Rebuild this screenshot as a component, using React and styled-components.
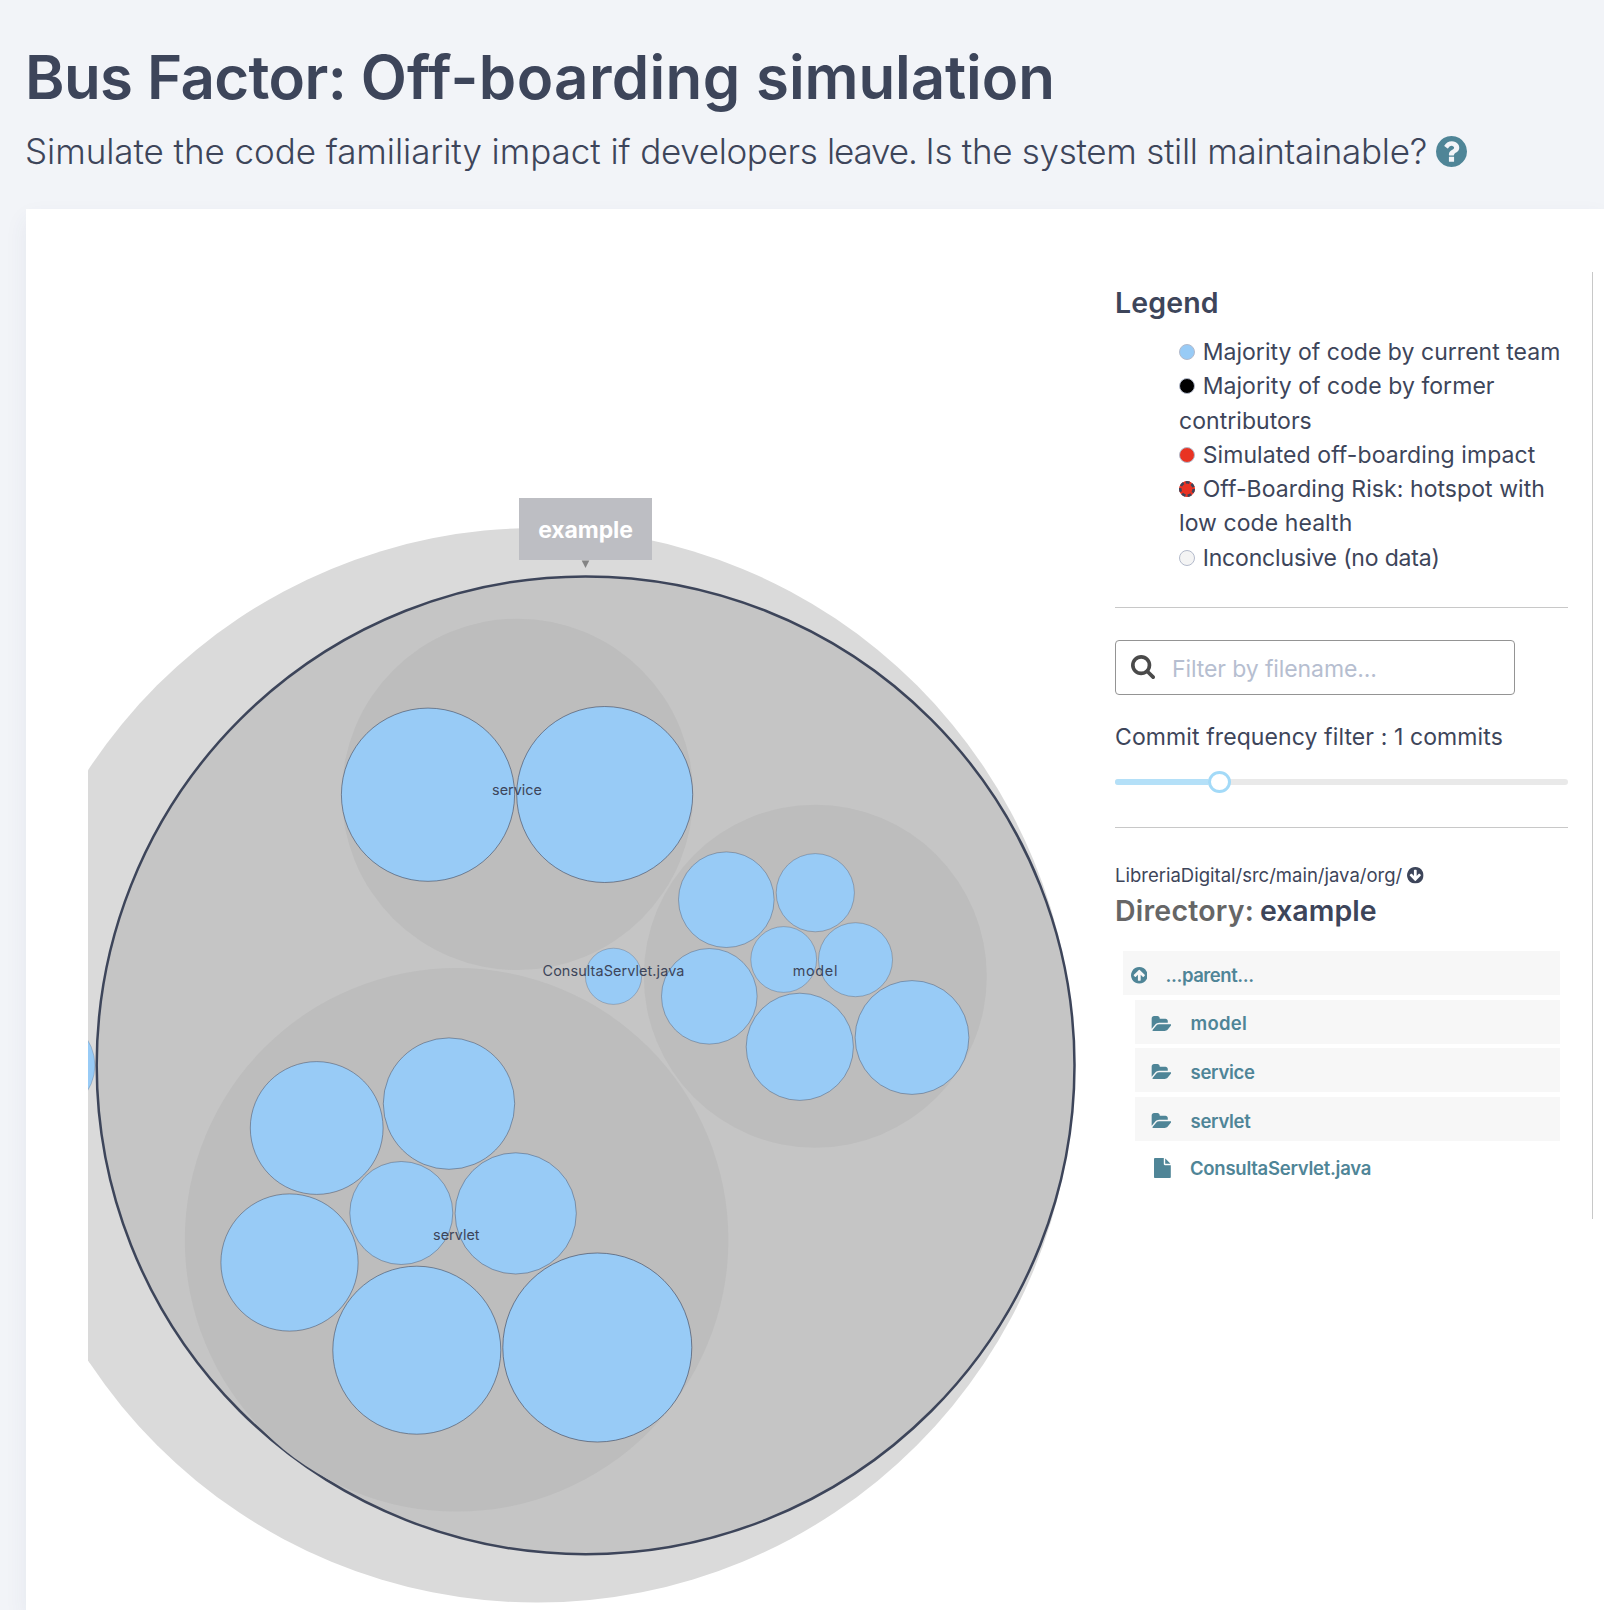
import React from 'react';
import styled, { createGlobalStyle } from 'styled-components';

const ink = '#3d455a';
const teal = '#4f8597';

const GlobalStyle = createGlobalStyle`
  * { box-sizing: border-box; }
  html, body { margin: 0; padding: 0; }
  body {
    background: #f2f4f8;
    color: ${ink};
    font-family: Inter, "Liberation Sans", sans-serif;
    overflow: hidden;
  }
`;

const Page = styled.div`
  display: flex;
  flex-direction: column;
  height: 1610px;
  padding: 41px 0 0 26px;
  overflow: hidden;
`;

const Header = styled.header`
  display: flex;
  flex-direction: column;
  gap: 16px;
  margin-bottom: 36px;
`;

const Title = styled.h1`
  margin: 0 0 0 -1px;
  font-size: 60px;
  line-height: 72px;
  font-weight: 600;
  letter-spacing: -0.1px;
  white-space: nowrap;
`;

const Subtitle = styled.p`
  display: flex;
  align-items: center;
  gap: 9px;
  margin: 0 0 0 -1px;
  font-size: 35px;
  line-height: 44px;
  font-weight: 300;
  letter-spacing: -0.263px;
  white-space: nowrap;
`;

const Tracked = styled.span`
  letter-spacing: ${(p) => p.$by}px;
`;

const Panel = styled.main`
  flex: 1;
  display: flex;
  align-items: flex-start;
  padding: 63px 0 0 62px;
  background: #fff;
  box-shadow: 0 10px 22px rgba(60, 70, 110, 0.07);
`;

const Chart = styled.svg`
  flex: none;
  display: block;
  width: 1027px;
  height: 1338px;
`;

const ChartLabel = styled.text`
  font-size: ${(p) => (p.$tip ? 23 : 14.4)}px;
  font-weight: ${(p) => (p.$tip ? 700 : 400)};
  letter-spacing: ${(p) => p.$tracking || 0}px;
  fill: ${(p) => (p.$tip ? '#fff' : ink)};
  text-anchor: middle;
`;

const Sidebar = styled.aside`
  flex: none;
  display: flex;
  flex-direction: column;
  width: 478px;
  height: 947px;
  padding: 13px 24px 0 0;
  border-right: 1px solid #c8c8c8;
`;

const Heading = styled.h2`
  display: flex;
  gap: 6px;
  margin: 0;
  font-size: 28.5px;
  line-height: 36px;
  font-weight: 600;
  letter-spacing: ${(p) => p.$tracking || 0}px;
`;

const Kind = styled.span`
  color: #666;
  letter-spacing: 0.2px;
`;

const LegendList = styled.ul`
  list-style: none;
  margin: 14px 0 32px;
  padding: 0 0 0 64px;
`;

const LegendItem = styled.li`
  font-size: 23px;
  line-height: 34.28px;
  letter-spacing: ${(p) => p.$tracking || 0}px;
`;

const Dot = styled.svg`
  width: 16px;
  height: 16px;
  margin-right: 7.7px;
`;

const Divider = styled.hr`
  flex: none;
  width: 100%;
  height: 1px;
  margin: 0;
  border: 0;
  background: #c8c8c8;
`;

const SearchBox = styled.label`
  display: flex;
  align-items: center;
  width: 400px;
  height: 55px;
  margin: 32px 0 25px;
  padding: 0 15px;
  gap: 17px;
  border: 1px solid #949494;
  border-radius: 4px;
`;

const SearchInput = styled.input`
  flex: 1;
  min-width: 0;
  padding: 4px 0 0;
  border: 0;
  outline: 0;
  background: none;
  color: ${ink};
  font: 400 23px/34px Inter, "Liberation Sans", sans-serif;
  letter-spacing: -0.1px;
  &::placeholder { color: #b6bed0; opacity: 1; }
`;

const SliderLabel = styled.div`
  font-size: 23px;
  line-height: 34px;
  letter-spacing: 0.1px;
`;

const SliderRail = styled.div`
  display: flex;
  align-items: center;
  height: 6px;
  margin: 25px 0 42px;
  border-radius: 6px;
  background: #e9e9e9;
`;

const SliderTrack = styled.div`
  width: 93px;
  height: 6px;
  border-radius: 6px 0 0 6px;
  background: #b4e0f8;
`;

const SliderHandle = styled.div`
  width: 23px;
  height: 22px;
  border: 3px solid #a3daf8;
  border-radius: 50%;
  background: #fff;
`;

const PathLine = styled.div`
  display: flex;
  align-items: center;
  gap: 5px;
  margin: 33px 0 4px;
  font-size: 18.5px;
  line-height: 28px;
`;

const FileTree = styled.nav`
  display: flex;
  flex-direction: column;
  gap: 4.667px;
  margin: 22px 8px 0 8px;
`;

const TreeRow = styled.a`
  display: flex;
  align-items: center;
  height: 44px;
  margin-left: ${(p) => (p.$kind === 'parent' ? 0 : 12)}px;
  padding: ${(p) => ({ parent: '5px 0 0 7.6px', folder: '3.4px 0 0 16px', file: '1px 0 0 19.4px' })[p.$kind]};
  gap: ${(p) => ({ parent: 18.4, folder: 19.2, file: 18.8 })[p.$kind]}px;
  background: ${(p) => (p.$kind === 'file' ? 'transparent' : '#f7f7f7')};
  color: ${teal};
  font-size: 18.5px;
  line-height: 28px;
  font-weight: 600;
  letter-spacing: ${(p) => p.$tracking}px;
`;

const Glyph = styled.svg`
  flex: none;
  display: block;
  fill: ${(p) => p.$color || 'currentColor'};
  transform: ${(p) => (p.$flip ? 'rotate(180deg)' : 'none')};
`;

const glyphs = {
  question: {
    box: '128 128 1536 1536',
    d: 'M1024 1376v-192q0-14-9-23t-23-9h-192q-14 0-23 9t-9 23v192q0 14 9 23t23 9h192q14 0 23-9t9-23zm256-672q0-88-55.5-163t-138.5-116-170-41q-243 0-371 213-15 24 8 42l132 100q7 6 19 6 16 0 25-12 53-68 86-92 34-24 86-24 48 0 85.5 26t37.5 59q0 38-20 61t-68 45q-63 28-115.5 86.5t-52.5 125.5v36q0 14 9 23t23 9h192q14 0 23-9t9-23q0-19 21.5-49.5t54.5-49.5q32-18 49-28.5t46-35 44.5-48 28-60.5 12.5-81zm384 192q0 209-103 385.5t-279.5 279.5-385.5 103-385.5-103-279.5-279.5-103-385.5 103-385.5 279.5-279.5 385.5-103 385.5 103 279.5 279.5 103 385.5z',
  },
  arrow: {
    box: '128 128 1536 1536',
    d: 'M1412 895q0-27-18-45l-362-362-91-91q-18-18-45-18t-45 18l-91 91-362 362q-18 18-18 45t18 45l91 91q18 18 45 18t45-18l189-189v502q0 26 19 45t45 19h128q26 0 45-19t19-45v-502l189 189q19 19 45 19t45-19l91-91q18-18 18-45zm252 1q0 209-103 385.5t-279.5 279.5-385.5 103-385.5-103-279.5-279.5-103-385.5 103-385.5 279.5-279.5 385.5-103 385.5 103 279.5 279.5 103 385.5z',
  },
  search: {
    box: '64 128 1664 1664',
    d: 'M1216 832q0-185-131.5-316.5t-316.5-131.5-316.5 131.5-131.5 316.5 131.5 316.5 316.5 131.5 316.5-131.5 131.5-316.5zm512 832q0 52-38 90t-90 38q-54 0-90-38l-343-342q-179 124-399 124-143 0-273.5-55.5t-225-150-150-225-55.5-273.5 55.5-273.5 150-225 225-150 273.5-55.5 273.5 55.5 225 150 150 225 55.5 273.5q0 220-124 399l343 343q37 37 37 90z',
  },
  folder: {
    box: '0 128 1943 1408',
    d: 'M1943 952q0 31-31 66l-336 396q-43 51-120.5 86.5t-143.5 35.5h-1088q-34 0-60.5-13t-26.5-43q0-31 31-66l336-396q43-51 120.5-86.5t143.5-35.5h1088q34 0 60.5 13t26.5 43zm-343-344v160h-832q-94 0-197 47.5t-164 119.5l-337 396-5 6q0-4-.5-12.5t-.5-12.5v-960q0-92 66-158t158-66h320q92 0 158 66t66 158v32h544q92 0 158 66t66 158z',
  },
  file: {
    box: '128 0 1536 1792',
    d: 'M1152 512v-472q22 14 36 28l408 408q14 14 28 36h-472zm-128 32q0 40 28 68t68 28h544v1056q0 40-28 68t-68 28h-1344q-40 0-68-28t-28-68v-1600q0-40 28-68t68-28h800v544z',
  },
};

function Icon({ name, w, h = w, color, flip }) {
  const g = glyphs[name];
  return (
    <Glyph viewBox={g.box} width={w} height={h} preserveAspectRatio="none" $color={color} $flip={flip}>
      <path d={g.d} />
    </Glyph>
  );
}

const directories = [
  [517.5, 794.4, 175.7],
  [815.3, 976.2, 171.5],
  [456.6, 1239.8, 271.8],
];

const files = [
  [428, 794.7, 86.6], [604.7, 794.5, 88],
  [726.3, 899.7, 47.8], [815.3, 892.7, 39.1], [783.7, 959.5, 32.9], [855.5, 959.7, 37],
  [709.3, 996.3, 47.8], [799.8, 1046.8, 53.6], [912, 1037.5, 56.9],
  [613.5, 976.3, 28.1],
  [316.7, 1128, 66.4], [449, 1103.6, 65.7], [401.3, 1213, 51.5], [515.7, 1213.4, 60.6],
  [289.5, 1262.5, 68.6], [416.8, 1350.2, 84], [597.3, 1347.5, 94.5],
];

const labels = [
  ['service', 517, 795, 0],
  ['ConsultaServlet.java', 613.5, 976, 0.1],
  ['model', 815.4, 976, 0.7],
  ['servlet', 456.3, 1240, 0],
];

function PackChart() {
  return (
    <Chart viewBox="88 272 1027 1338">
      <circle cx="537" cy="1065.3" r="537.3" fill="#dadada" />
      <circle cx="46.9" cy="1065.3" r="48" fill="#98cbf6" stroke={ink} strokeOpacity="0.3" strokeWidth="0.8" />
      <circle cx="585.6" cy="1065.3" r="488.9" fill="#c5c5c5" stroke={ink} strokeWidth="2.5" />
      {directories.map(([x, y, r]) => (
        <circle key={x} cx={x} cy={y} r={r} fill="#bdbdbd" />
      ))}
      {files.map(([x, y, r]) => (
        <circle key={x} cx={x} cy={y} r={r} fill="#98cbf6" stroke={ink} strokeOpacity={0.12 + r / 190} strokeWidth="1" />
      ))}
      {labels.map(([t, x, y, s]) => (
        <ChartLabel key={t} x={x} y={y} $tracking={s}>{t}</ChartLabel>
      ))}
      <rect x="519" y="498" width="133" height="62" fill="#bdbec3" />
      <ChartLabel $tip $tracking={-0.1} x="585.5" y="537.9">example</ChartLabel>
      <path d="M581.7 560.5h7.6l-3.8 7.6z" fill="#848484" />
    </Chart>
  );
}

const legend = [
  { text: 'Majority of code by current team', fill: '#98cbf6', tracking: 0.03 },
  { text: 'Majority of code by former contributors', fill: '#000', tracking: 0.05 },
  { text: 'Simulated off-boarding impact', fill: '#e93323', tracking: 0.08 },
  { text: 'Off-Boarding Risk: hotspot with low code health', fill: '#e93323', tracking: 0.07, risk: true },
  { text: 'Inconclusive (no data)', fill: '#f4f4f4', tracking: -0.17 },
];

const rows = [
  { text: '...parent...', kind: 'parent', tracking: -0.45 },
  { text: 'model', kind: 'folder', tracking: 0.25 },
  { text: 'service', kind: 'folder', tracking: -0.3 },
  { text: 'servlet', kind: 'folder', tracking: -0.3 },
  { text: 'ConsultaServlet.java', kind: 'file', tracking: -0.26 },
];

const rowIcons = {
  parent: <Icon name="arrow" w={16.6} />,
  folder: <Icon name="folder" w={20.4} h={15} />,
  file: <Icon name="file" w={16.8} h={20} />,
};

export default function App() {
  return (
    <Page>
      <GlobalStyle />
      <Header>
        <Title>
          <Tracked $by={-0.62}>Bus Factor: </Tracked>
          <Tracked $by={0.35}>Off-boarding </Tracked>
          simulation
        </Title>
        <Subtitle>
          <span>
            <Tracked $by={-0.06}>Simulate the code familiarity impact if </Tracked>
            <Tracked $by={-0.35}>developers </Tracked>
            <Tracked $by={-1.1}>leave. </Tracked>
            <Tracked $by={-0.29}>Is the system still maintainable?</Tracked>
          </span>
          <Icon name="question" w={31} color={teal} />
        </Subtitle>
      </Header>
      <Panel>
        <PackChart />
        <Sidebar>
          <Heading $tracking={0.15}>Legend</Heading>
          <LegendList>
            {legend.map((l) => (
              <LegendItem key={l.text} $tracking={l.tracking}>
                <Dot viewBox="0 0 16 16">
                  <circle cx="8" cy="8" r="7.5" fill={l.fill} stroke={l.risk ? l.fill : '#b3bacb'} />
                  {l.risk && (
                    <circle cx="8" cy="8" r="6.7" fill="none" stroke={ink} strokeWidth="2.6" strokeDasharray="3.8 2.214" />
                  )}
                </Dot>
                {l.text}
              </LegendItem>
            ))}
          </LegendList>
          <Divider />
          <SearchBox>
            <Icon name="search" w={24} color="#4a4a4a" />
            <SearchInput placeholder="Filter by filename..." />
          </SearchBox>
          <SliderLabel>Commit frequency filter : 1 commits</SliderLabel>
          <SliderRail>
            <SliderTrack />
            <SliderHandle />
          </SliderRail>
          <Divider />
          <PathLine>
            LibreriaDigital/src/main/java/org/
            <Icon name="arrow" w={16.6} flip />
          </PathLine>
          <Heading>
            <Kind>Directory:</Kind>
            example
          </Heading>
          <FileTree>
            {rows.map((r) => (
              <TreeRow key={r.text} $kind={r.kind} $tracking={r.tracking}>
                {rowIcons[r.kind]}
                {r.text}
              </TreeRow>
            ))}
          </FileTree>
        </Sidebar>
      </Panel>
    </Page>
  );
}
